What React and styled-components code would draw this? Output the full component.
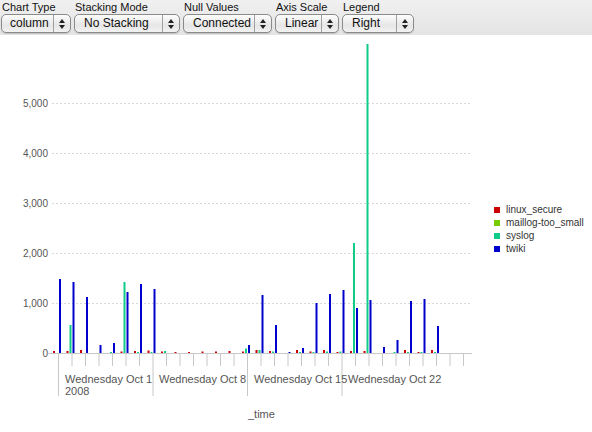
import React from 'react';
import styled, { createGlobalStyle } from 'styled-components';

const Global = createGlobalStyle`
  body { margin: 0; background: #fff; font-family: "Liberation Sans", Arial, sans-serif; }
`;

const Page = styled.div`
  width: 592px;
  height: 432px;
  overflow: hidden;
`;

const Toolbar = styled.div`
  display: flex;
  gap: 3px;
  padding: 1px 0 0 1px;
  height: 35px;
  box-sizing: border-box;
  background: linear-gradient(#f0f0f0, #e4e4e4);
`;

const Field = styled.div`
  display: flex;
  flex-direction: column;
  width: ${p => p.w}px;
`;

const Label = styled.div`
  font-size: 11px;
  line-height: 13px;
  color: #111;
  padding-left: 1px;
`;

const Select = styled.div`
  position: relative;
  height: 17px;
  border: 1px solid #8a8a8a;
  border-radius: 5px;
  background: linear-gradient(#fdfdfd, #e6e6e6 60%, #f2f2f2);
  font-size: 12px;
  line-height: 17px;
  padding-left: ${p => p.pad || 10}px;
  color: #111;
  box-shadow: 0 1px 1px rgba(0,0,0,0.15);
`;

const Arrows = styled.div`
  position: absolute;
  right: 0;
  top: 0;
  bottom: 0;
  width: 16px;
  border-left: 1px solid #a0a0a0;
  display: flex;
  align-items: center;
  justify-content: center;
`;

const Legend = styled.div`
  position: absolute;
  left: 494px;
  top: 169px;
  display: flex;
  flex-direction: column;
  gap: 1px;
`;

const LegendRow = styled.div`
  display: flex;
  align-items: center;
  gap: 6px;
  font-size: 10px;
  line-height: 12px;
  color: #333;
`;

const Swatch = styled.span`
  width: 6px;
  height: 6px;
  background: ${p => p.c};
`;

const ChartArea = styled.div`
  position: relative;
  height: 397px;
`;

const fields = [
  ['Chart Type', 'column', 70],
  ['Stacking Mode', 'No Stacking', 106],
  ['Null Values', 'Connected', 89],
  ['Axis Scale', 'Linear', 64],
  ['Legend', 'Right', 72],
];

// per day: [red, teal, blue]
const data = [
  [40, 0, 1480], [40, 560, 1420], [60, 0, 1120], [0, 0, 160], [0, 20, 200],
  [30, 1420, 1220], [40, 20, 1380], [50, 20, 1280], [30, 40, 0], [20, 0, 0],
  [20, 0, 0], [30, 0, 0], [30, 0, 0], [40, 0, 0], [30, 90, 160],
  [60, 60, 1160], [40, 30, 560], [0, 0, 20], [60, 20, 100], [30, 20, 1000],
  [60, 30, 1180], [20, 30, 1260], [40, 2200, 900], [40, 6200, 1060], [0, 0, 120],
  [0, 20, 260], [60, 20, 1040], [20, 20, 1080], [60, 20, 540], [0, 0, 0], [0, 0, 0],
];

const base = 318;
const top = 9;
const k = 0.05;

function Chart() {
  const ticks = [];
  for (let i = 0; i < 31; i++) {
    const x = 58.5 + i * 13.5;
    const major = i === 0 || i === 7 || i === 14 || i === 21;
    ticks.push(<line key={'t' + i} x1={x} x2={x} y1={base} y2={major ? 361 : 331} stroke="#c8c8c8" strokeWidth="1" />);
  }
  const bars = [];
  data.forEach((d, i) => {
    const x = 58 + i * 13.5;
    const [r, t, b] = d;
    if (r) bars.push(<rect key={'r' + i} x={x - 5} y={base - r * k} width="2" height={r * k} fill="#cc0000" />);
    if (t) bars.push(<rect key={'g' + i} x={x - 2} y={Math.max(top, base - t * k)} width="2" height={Math.min(base - top, t * k)} fill="#11cc88" />);
    if (b) bars.push(<rect key={'b' + i} x={x + 1} y={base - b * k} width="2" height={b * k} fill="#0000cc" />);
  });
  const grid = [1000, 2000, 3000, 4000, 5000];
  return (
    <svg width="592" height="397" style={{ position: 'absolute', left: 0, top: 0 }}>
      {grid.map(g => (
        <g key={g}>
          <line x1="52" x2="472" y1={base - g * k + 0.5} y2={base - g * k + 0.5} stroke="#d8d8d8" strokeDasharray="2,2" />
          <text x="48" y={base - g * k + 4} textAnchor="end" fontSize="10" fill="#555" fontFamily="Liberation Sans, Arial, sans-serif">{g.toLocaleString('en-US')}</text>
        </g>
      ))}
      <text x="48" y={base + 4} textAnchor="end" fontSize="10" fill="#555" fontFamily="Liberation Sans, Arial, sans-serif">0</text>
      <line x1="48" x2="472" y1={base + 0.5} y2={base + 0.5} stroke="#c8c8c8" />
      {ticks}
      {bars}
    </svg>
  );
}

const AxisLabel = styled.div`
  position: absolute;
  font-size: 11px;
  color: #555;
  left: ${p => p.x}px;
  top: ${p => p.y}px;
`;

export default function App() {
  return (
    <Page>
      <Global />
      <Toolbar>
        {fields.map(([l, v, w]) => (
          <Field key={l} w={w}>
            <Label>{l}</Label>
            <Select pad={l === 'Chart Type' ? 8 : 9}>
              {v}
              <Arrows>
                <svg width="6" height="10" viewBox="0 0 6 10">
                  <path d="M0 4 L3 0 L6 4Z M0 6 L3 10 L6 6Z" fill="#222" />
                </svg>
              </Arrows>
            </Select>
          </Field>
        ))}
      </Toolbar>
      <ChartArea>
        <Chart />
        <AxisLabel x={65} y={338}>Wednesday Oct 1</AxisLabel>
        <AxisLabel x={65} y={350}>2008</AxisLabel>
        <AxisLabel x={159} y={338}>Wednesday Oct 8</AxisLabel>
        <AxisLabel x={254} y={338}>Wednesday Oct 15</AxisLabel>
        <AxisLabel x={348} y={338}>Wednesday Oct 22</AxisLabel>
        <AxisLabel x={248} y={373}>_time</AxisLabel>
        <Legend>
          <LegendRow><Swatch c="#cc0000" />linux_secure</LegendRow>
          <LegendRow><Swatch c="#77cc00" />maillog-too_small</LegendRow>
          <LegendRow><Swatch c="#11cc88" />syslog</LegendRow>
          <LegendRow><Swatch c="#0000cc" />twiki</LegendRow>
        </Legend>
      </ChartArea>
    </Page>
  );
}
